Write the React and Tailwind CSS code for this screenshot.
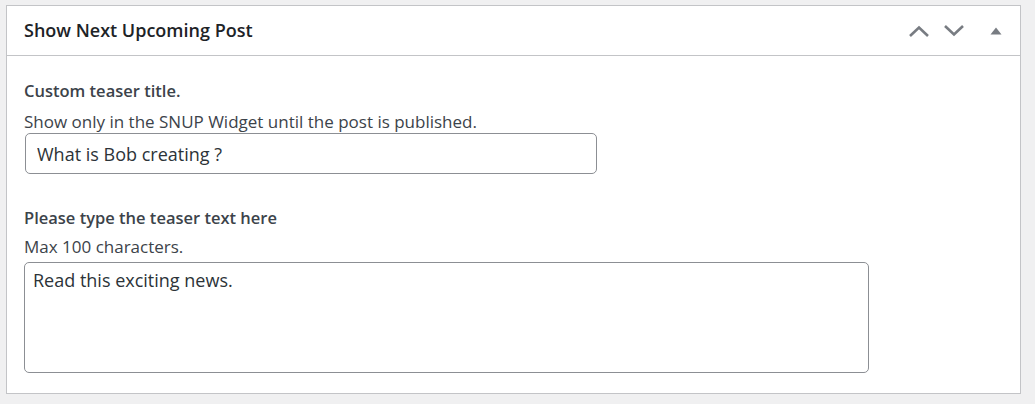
import React from 'react';

const ChevronUp = () => (
  <svg width="22" height="14" viewBox="0 0 22 14" className="text-[#787c82]">
    <path d="M2 12 L11 3.5 L20 12" fill="none" stroke="currentColor" strokeWidth="2.6" />
  </svg>
);

const ChevronDown = () => (
  <svg width="22" height="14" viewBox="0 0 22 14" className="text-[#787c82]">
    <path d="M2 2 L11 10.5 L20 2" fill="none" stroke="currentColor" strokeWidth="2.6" />
  </svg>
);

const Caret = () => (
  <svg width="12" height="8" viewBox="0 0 12 8" className="text-[#787c82]">
    <path d="M0.5 7.5 L6 0.5 L11.5 7.5 Z" fill="currentColor" />
  </svg>
);

const App = () => {
  return (
    <div className="w-[1035px] h-[404px] bg-[#f0f0f1] pt-[5px] pl-[6px] font-['Open_Sans',sans-serif] overflow-hidden">
      <div className="w-[1015px] h-[389px] bg-white border border-[#c3c4c7]">
        <div className="flex items-center justify-between h-[50px] pl-[17px] pr-[7px] border-b border-[#c3c4c7]">
          <h2 className="text-[18px] font-semibold text-[#1d2327]">Show Next Upcoming Post</h2>
          <div className="flex items-center">
            <button className="w-[35px] h-[36px] flex items-center justify-center">
              <ChevronUp />
            </button>
            <button className="w-[35px] h-[36px] flex items-center justify-center">
              <ChevronDown />
            </button>
            <button className="w-[35px] h-[36px] flex items-center justify-center ml-[7px]">
              <Caret />
            </button>
          </div>
        </div>

        <div className="pl-[17px] pt-[24px] text-[#3c434a] text-[17px]">
          <p className="text-[16.5px] font-semibold leading-[22px]">Custom teaser title.</p>
          <p className="mt-[9px] leading-[22px]">Show only in the SNUP Widget until the post is published.</p>
          <input
            type="text"
            defaultValue="What is Bob creating ?"
            className="block ml-[1px] w-[572px] h-[41px] px-[11px] text-[18px] text-[#2c3338] border border-[#8c8f94] rounded-[5px] outline-none"
          />

          <p className="mt-[33px] text-[16.5px] font-semibold leading-[22px]">Please type the teaser text here</p>
          <p className="mt-[7px] leading-[22px]">Max 100 characters.</p>
          <textarea
            defaultValue="Read this exciting news."
            className="block mt-[4px] w-[845px] h-[111px] px-[8px] py-[5px] text-[18px] leading-[24px] text-[#2c3338] border border-[#8c8f94] rounded-[5px] outline-none resize-none"
          />
        </div>
      </div>
    </div>
  );
};

export default App;
